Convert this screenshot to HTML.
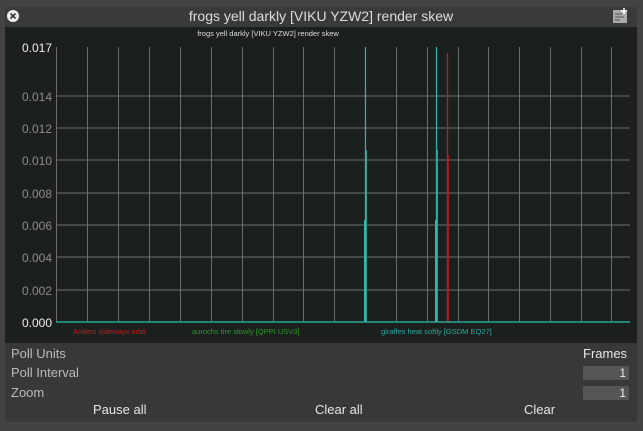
<!DOCTYPE html>
<html><head><style>
body{margin:0;width:643px;height:431px;background:#434343;overflow:hidden;font-family:"Liberation Sans","DejaVu Sans",sans-serif;position:relative}
.panel{position:absolute;left:5px;top:7px;width:632px;height:415px;background:#383838;border-radius:3px}
.title{position:absolute;left:0;top:0;width:632px;height:20px;background:#3a3a3a;color:#ddd;font-size:14px;text-align:center;line-height:19px}
.t{position:absolute;font-size:13px;color:#bbb}
.w{color:#e6e6e6}
.inp{position:absolute;left:583px;width:46px;height:14px;background:#555;color:#eee;font-size:12px;text-align:right;line-height:14px;box-sizing:border-box;padding-right:3px}
</style></head><body>
<div class="panel"><div class="title">frogs yell darkly [VIKU YZW2] render skew</div></div>
<svg style="position:absolute;left:0;top:0" width="643" height="431">
<circle cx="13" cy="16" r="6" fill="#eee"/>
<path d="M10.5 13.5l5 5M15.5 13.5l-5 5" stroke="#333" stroke-width="1.6"/>
<rect x="613" y="10" width="14" height="13" fill="#aaa"/>
<path d="M615 14h7M615 17h9M615 20h5" stroke="#555" stroke-width="1"/>
<path d="M624 8v6M621 11h6" stroke="#fff" stroke-width="1.6"/>
<rect x="5" y="27" width="632" height="316" fill="#1b201e"/>
<g stroke="#6b6e6c" stroke-width="1">
<line x1="56" y1="96" x2="630" y2="96"/><line x1="56" y1="128" x2="630" y2="128"/><line x1="56" y1="160" x2="630" y2="160"/><line x1="56" y1="193" x2="630" y2="193"/><line x1="56" y1="225" x2="630" y2="225"/><line x1="56" y1="257" x2="630" y2="257"/><line x1="56" y1="290" x2="630" y2="290"/>
<line x1="56.5" y1="47" x2="56.5" y2="322"/><line x1="87.5" y1="47" x2="87.5" y2="322"/><line x1="118.5" y1="47" x2="118.5" y2="322"/><line x1="149.5" y1="47" x2="149.5" y2="322"/><line x1="180.5" y1="47" x2="180.5" y2="322"/><line x1="211.5" y1="47" x2="211.5" y2="322"/><line x1="242.5" y1="47" x2="242.5" y2="322"/><line x1="273.5" y1="47" x2="273.5" y2="322"/><line x1="303.5" y1="47" x2="303.5" y2="322"/><line x1="334.5" y1="47" x2="334.5" y2="322"/><line x1="365.5" y1="47" x2="365.5" y2="322"/><line x1="396.5" y1="47" x2="396.5" y2="322"/><line x1="427.5" y1="47" x2="427.5" y2="322"/><line x1="458.5" y1="47" x2="458.5" y2="322"/><line x1="488.5" y1="47" x2="488.5" y2="322"/><line x1="519.5" y1="47" x2="519.5" y2="322"/><line x1="550.5" y1="47" x2="550.5" y2="322"/><line x1="581.5" y1="47" x2="581.5" y2="322"/><line x1="611.5" y1="47" x2="611.5" y2="322"/>
</g>
<g stroke="#30b8b0" stroke-width="1.2">
<line x1="365.5" y1="47" x2="365.5" y2="322"/><line x1="366.2" y1="150" x2="366.2" y2="322"/><line x1="364.6" y1="220" x2="364.6" y2="322"/>
<line x1="436.5" y1="47" x2="436.5" y2="322"/><line x1="437.2" y1="150" x2="437.2" y2="322"/><line x1="435.6" y1="220" x2="435.6" y2="322"/>
</g>
<line x1="447.5" y1="53" x2="447.5" y2="322" stroke="#b02020" stroke-width="1.3"/>
<line x1="448.3" y1="155" x2="448.3" y2="322" stroke="#b02020" stroke-width="1"/>
<line x1="56" y1="322" x2="630" y2="322" stroke="#2aa89e" stroke-width="1.5"/>
<g font-size="12" fill="#8a8c8b" text-anchor="end" font-family="Liberation Sans,sans-serif">
<text x="52" y="52" fill="#eee">0.017</text><text x="52" y="101">0.014</text><text x="52" y="133">0.012</text><text x="52" y="165">0.010</text><text x="52" y="198">0.008</text><text x="52" y="230">0.006</text><text x="52" y="262">0.004</text><text x="52" y="295">0.002</text><text x="52" y="327" fill="#eee">0.000</text>
</g>
<text x="268" y="36" font-size="7.5" fill="#ddd" text-anchor="middle">frogs yell darkly [VIKU YZW2] render skew</text>
<text x="73" y="334" font-size="7.5" fill="#b02020">Antlers sideways orbit</text>
<text x="192" y="334" font-size="7.5" fill="#2a9a2a">aurochs tire slowly [QPPI USV3]</text>
<text x="381" y="334" font-size="7.5" fill="#2aa89e">giraffes heat softly [GSDM EQ27]</text>
</svg>
<div class="t" style="left:11px;top:346px">Poll Units</div>
<div class="t" style="left:11px;top:365px">Poll Interval</div>
<div class="t" style="left:11px;top:385px">Zoom</div>
<div class="t w" style="left:583px;top:346px">Frames</div>
<div class="inp" style="top:366px">1</div>
<div class="inp" style="top:386px">1</div>
<div class="t w" style="left:93px;top:402px">Pause all</div>
<div class="t w" style="left:315px;top:402px">Clear all</div>
<div class="t w" style="left:524px;top:402px">Clear</div>
</body></html>
